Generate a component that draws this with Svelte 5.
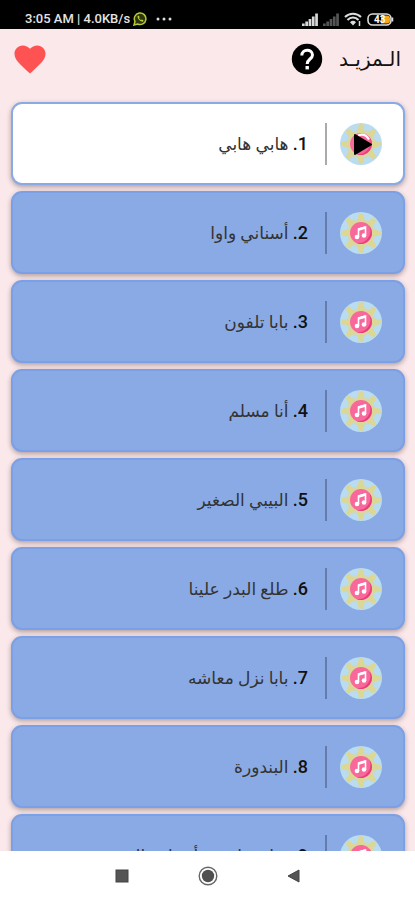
<script>
  const songs = [
    'هابي هابي',
    'أسناني واوا',
    'بابا تلفون',
    'أنا مسلم',
    'البيبي الصغير',
    'طلع البدر علينا',
    'بابا نزل معاشه',
    'البندورة',
    'هيا صغار في أجمل حال'
  ];
  let current = $state(0);
  const rays = Array.from({ length: 8 }, (_, i) => i * 45);
</script>

<div class="screen">
  <div class="status">
    <div class="group left">
      <span>3:05 AM | 4.0KB/s</span>
      <svg width="14" height="14" viewBox="0 0 14 14" aria-hidden="true">
        <path d="M1 13l1-3.5A5.8 5.8 0 1 1 4.600 12z" fill="#2c360c" stroke="#b9c93a" stroke-width="1.500" />
        <path d="M4.500 4c0 3 2.500 5.500 5.500 5.800l.5-1.500-1.700-.9-.8.7C7 7.600 6.400 7 6 6.100l.7-.8-.8-1.600z" fill="#b9c93a" />
      </svg>
      <svg class="dots" width="16" height="4" viewBox="0 0 16 4" fill="#ddd" aria-hidden="true">
        <circle cx="2" cy="2" r="1.500" /><circle cx="8" cy="2" r="1.500" /><circle cx="14" cy="2" r="1.500" />
      </svg>
    </div>
    <div class="group right">
      {#each ['#d8d8d8', '#555'] as tone}
        <svg width="16" height="13" viewBox="0 0 16 13" fill={tone} aria-hidden="true">
          <path d="M0 10.500h2.700V13H0zM3.300 8.500h2.700V13H3.300zM6.600 6h2.700v7H6.600zM9.900 3.500h2.700V13H9.900zM13.200 0.500h2.700V13h-2.700z" />
        </svg>
      {/each}
      <svg width="18" height="14" viewBox="0 0 18 14" fill="none" stroke="#ddd" stroke-width="2" aria-hidden="true">
        <path d="M1 5c4.500-4.500 11.500-4.500 16 0M3.500 8c3-3.200 8-3.200 11 0" />
        <path d="M6 10.200c2-1.800 4-1.800 6 0L9 13.500z" fill="#ddd" stroke="none" />
        <path d="M15.500 9v5" stroke-width="1.500" />
      </svg>
      <svg width="27" height="13" viewBox="0 0 27 13" aria-hidden="true">
        <rect x="1" y="1" width="23" height="11" rx="4.500" fill="#000" stroke="#ddd" stroke-width="1.600" />
        <path d="M14 2.500h6a3 3 0 0 1 3 3v2a3 3 0 0 1-3 3h-6z" fill="#f5a81c" />
        <path d="M25.500 4.500v4" stroke="#ddd" stroke-width="1.500" />
        <text x="7" y="10" font-size="10" font-weight="700" fill="#fff">43</text>
      </svg>
    </div>
  </div>

  <header>
    <h1>الـمزيـد</h1>
    <button class="icon" aria-label="مساعدة">
      <svg width="32" height="32" viewBox="0 0 32 32" aria-hidden="true">
        <circle cx="16" cy="16" r="15.200" fill="#000" />
        <path d="M10.800 12.500c0-7 10.700-7 10.700-.6 0 4-5.300 4.300-5.300 9" fill="none" stroke="#fff" stroke-width="3" />
        <rect x="14.500" y="23" width="3.400" height="3.400" fill="#fff" />
      </svg>
    </button>
    <button class="icon heart" aria-label="المفضلة">
      <svg width="32" height="29" viewBox="0 0 32 29" aria-hidden="true">
        <path d="M16 28.500L13.700 26.400C5.600 19.100.5 14.500.5 8.800.5 4.200 4.100.5 8.800.5c2.700 0 5.400 1.300 7.200 3.300C17.800 1.800 20.500.5 23.200.5c4.700 0 8.300 3.700 8.300 8.300 0 5.700-5.100 10.300-13.200 17.600z" fill="#ff5252" />
      </svg>
    </button>
  </header>

  <main>
    <ol>
      {#each songs as song, i}
        <li>
          <button class="card" class:active={current === i} onclick={() => (current = i)}>
            <svg class="disc" width="42" height="42" viewBox="0 0 42 42" aria-hidden="true">
              <circle cx="21" cy="21" r="21" fill="#b9dcf0" />
              <circle cx="21" cy="21" r="14.500" fill="#cfd9b8" />
              {#each rays as angle}
                <path d="M18 10L19.500 2h3L24 10z" fill="#dcd795" stroke="#dcd795" stroke-width="1.500" transform="rotate({angle} 21 21)" />
              {/each}
              <circle cx="21" cy="21" r="11" fill="#f9689a" />
              <path d="M29 13.500a11 11 0 0 1-13 17.300A12 12 0 0 0 29 13.500z" fill="#e83e7b" />
              {#if current === i}
                <path d="M18 12.500q7-3 11 4" fill="none" stroke="#fff" stroke-width="2" />
                <path d="M15 12v19l16-9.500z" fill="#000" stroke="#000" stroke-width="2" stroke-linejoin="round" />
              {:else}
                <path d="M18.500 25v-8l7-2v8.500" fill="none" stroke="#fff" stroke-width="1.600" />
                <path d="M18.500 17.500l7-2" stroke="#fff" stroke-width="2.600" />
                <circle cx="17" cy="25" r="2.300" fill="#fff" />
                <circle cx="24" cy="23.500" r="2.300" fill="#fff" />
              {/if}
            </svg>
            <span class="rule"></span>
            <span class="title"><b>{i + 1}.</b> {song}</span>
          </button>
        </li>
      {/each}
    </ol>
  </main>

  <nav>
    <button aria-label="التطبيقات الأخيرة">
      <svg width="20" height="20" viewBox="0 0 20 20"><rect x="4" y="4" width="12" height="12" fill="#555" stroke="#444" /></svg>
    </button>
    <button aria-label="الرئيسية">
      <svg width="20" height="20" viewBox="0 0 20 20"><circle cx="10" cy="10" r="8.800" fill="none" stroke="#666" stroke-width="1.400" /><circle cx="10" cy="10" r="6.200" fill="#505050" /></svg>
    </button>
    <button aria-label="رجوع">
      <svg width="20" height="20" viewBox="0 0 20 20"><path d="M4 10l11-6v12z" fill="#555" stroke="#444" /></svg>
    </button>
  </nav>
</div>

<style>
  .screen {
    display: flex;
    flex-direction: column;
    height: 100vh;
    background: #fae8ea;
    color: #111;
    font-family: Roboto, 'DejaVu Sans', sans-serif;
  }
  button {
    margin: 0;
    padding: 0;
    border: 0;
    background: none;
    color: inherit;
    font: inherit;
    cursor: pointer;
  }
  svg {
    display: block;
    flex: none;
  }
  .status {
    display: flex;
    justify-content: space-between;
    align-items: flex-end;
    box-sizing: border-box;
    height: 29px;
    padding: 0 21px 3px 25px;
    background: #000;
    color: #e4e4e4;
    font-size: 13px;
    font-weight: 500;
    line-height: 14px;
  }
  .group {
    display: flex;
    align-items: center;
  }
  .left {
    gap: 3px;
  }
  .dots {
    margin-left: 6px;
  }
  .right {
    gap: 5px;
  }
  header {
    display: flex;
    direction: rtl;
    align-items: center;
    gap: 16px;
    height: 60px;
    padding: 0 14px;
  }
  h1 {
    margin: 0;
    font-size: 20px;
    font-weight: 400;
    line-height: 28px;
  }
  .heart {
    margin-right: auto;
  }
  main {
    flex: 1;
    min-height: 0;
    overflow: hidden;
  }
  ol {
    display: flex;
    flex-direction: column;
    gap: 6px;
    margin: 0;
    padding: 13px 10px 0 11px;
    list-style: none;
  }
  .card {
    display: flex;
    direction: rtl;
    align-items: center;
    box-sizing: border-box;
    width: 100%;
    height: 83px;
    padding: 0 21px;
    border: 2px solid #7ba0e5;
    border-radius: 11px;
    background: #8aaae5;
    box-shadow: 0 2px 5px rgba(70, 45, 45, 0.4);
    text-align: right;
  }
  .card.active {
    background: #fff;
    border-color: #8aaae5;
  }
  .rule {
    width: 2px;
    height: 42px;
    margin: 0 13px 0 17px;
    background: #657bab;
  }
  .active .rule {
    background: #aaa;
  }
  .title {
    color: #333;
    font-size: 17px;
    line-height: 24px;
  }
  b {
    color: #111;
    font-size: 18px;
    font-weight: 500;
  }
  nav {
    display: flex;
    justify-content: center;
    align-items: center;
    gap: 66px;
    height: 49px;
    background: #fff;
  }
</style>
